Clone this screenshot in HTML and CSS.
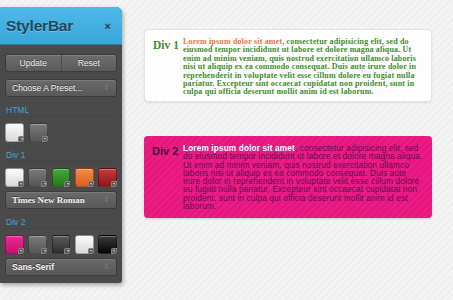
FILE: index.html
```html
<!DOCTYPE html>
<html lang="en">
  <head>
    <meta charset="UTF-8" />
    <title>StylerBar</title>
    <link rel="stylesheet" href="styles.css">
  </head>
  <body>
    <div id="page">
      <div id="stylerbar">
        <div class="bar-head">
          <span class="bar-title">StylerBar</span>
          <span class="bar-close">&times;</span>
        </div>
        <div class="bar-body">
          <div class="btn-row">
            <div class="btn">Update</div>
            <div class="btn">Reset</div>
          </div>
          <div class="select first">Choose A Preset...<span class="arrows">&#8661;</span></div>

          <div class="label">HTML</div>
          <div class="swatches">
            <div class="swatch white"></div>
            <div class="swatch grey"></div>
          </div>

          <div class="label">Div 1</div>
          <div class="swatches">
            <div class="swatch white"></div>
            <div class="swatch grey"></div>
            <div class="swatch green"></div>
            <div class="swatch orange"></div>
            <div class="swatch red"></div>
          </div>
          <div class="select serif">Times New Roman<span class="arrows">&#8661;</span></div>

          <div class="label">Div 2</div>
          <div class="swatches">
            <div class="swatch pink"></div>
            <div class="swatch grey"></div>
            <div class="swatch dark"></div>
            <div class="swatch white"></div>
            <div class="swatch black"></div>
          </div>
          <div class="select">Sans-Serif<span class="arrows">&#8661;</span></div>
        </div>
      </div>

      <div id="content">
        <div class="card" id="div1">
          <div class="card-title">Div 1</div>
          <p><span class="hl">Lorem ipsum dolor sit amet</span>, consectetur adipisicing elit, sed do eiusmod tempor incididunt ut labore et dolore magna aliqua. Ut enim ad minim veniam, quis nostrud exercitation ullamco laboris nisi ut aliquip ex ea commodo consequat. Duis aute irure dolor in reprehenderit in voluptate velit esse cillum dolore eu fugiat nulla pariatur. Excepteur sint occaecat cupidatat non proident, sunt in culpa qui officia deserunt mollit anim id est laborum.</p>
        </div>
        <div class="card" id="div2">
          <div class="card-title">Div 2</div>
          <p><span class="hl">Lorem ipsum dolor sit amet</span>, consectetur adipisicing elit, sed do eiusmod tempor incididunt ut labore et dolore magna aliqua. Ut enim ad minim veniam, quis nostrud exercitation ullamco laboris nisi ut aliquip ex ea commodo consequat. Duis aute irure dolor in reprehenderit in voluptate velit esse cillum dolore eu fugiat nulla pariatur. Excepteur sint occaecat cupidatat non proident, sunt in culpa qui officia deserunt mollit anim id est laborum.</p>
        </div>
      </div>
    </div>
  </body>
</html>
```

FILE: styles.css
```css
* {
  box-sizing: border-box;
}
body {
  margin: 0;
  background-color: #f0f0f0;
  background-image: repeating-linear-gradient(135deg, rgba(255,255,255,0.35) 0px, rgba(255,255,255,0.35) 2px, transparent 2px, transparent 5px);
  font-family: "Liberation Sans", Arial, sans-serif;
  overflow: hidden;
}
#page {
  display: flex;
  align-items: flex-start;
  height: 300px;
}

/* sidebar */
#stylerbar {
  width: 122px;
  margin-top: 7px;
  background-color: #4b4a4a;
  border-radius: 0 6px 3px 0;
  box-shadow: 1px 2px 4px rgba(0, 0, 0, 0.35);
}
.bar-head {
  height: 38px;
  padding: 0 11px 0 6px;
  display: flex;
  align-items: center;
  justify-content: space-between;
  background: linear-gradient(#4fb9e9, #39a6da);
  border-top-right-radius: 6px;
  border-bottom: 1px solid #2f7fa8;
}
.bar-title {
  font-size: 15.5px;
  font-weight: bold;
  color: #25475a;
  letter-spacing: -0.2px;
  text-shadow: 0 1px 0 rgba(255, 255, 255, 0.25);
  padding-top: 1px;
}
.bar-close {
  font-size: 11px;
  font-weight: bold;
  color: #2e3a42;
}
.bar-body {
  padding: 9px 5px 7px 5px;
}
.btn-row {
  display: flex;
  height: 18px;
  border: 1px solid #3d3c3c;
  border-radius: 3px;
  background: linear-gradient(#6e6d6d, #5c5b5b);
  box-shadow: inset 0 1px 0 rgba(255, 255, 255, 0.15);
}
.btn {
  flex: 1;
  display: flex;
  align-items: center;
  justify-content: center;
  font-size: 8.5px;
  color: #ececec;
  text-shadow: 0 -1px 0 rgba(0, 0, 0, 0.4);
}
.btn + .btn {
  border-left: 1px solid #4f4e4e;
}
.select {
  position: relative;
  height: 18px;
  margin-top: 4px;
  padding-left: 6px;
  display: flex;
  align-items: center;
  border: 1px solid #3d3c3c;
  border-radius: 3px;
  background: linear-gradient(#6a6969, #5a5959);
  box-shadow: inset 0 1px 0 rgba(255, 255, 255, 0.12);
  font-size: 8.5px;
  font-weight: bold;
  color: #f0f0f0;
  text-shadow: 0 -1px 0 rgba(0, 0, 0, 0.4);
}
.select.first {
  margin-top: 7px;
  font-weight: normal;
}
.select.serif {
  font-family: "Liberation Serif", "Times New Roman", serif;
  font-size: 9px;
}
.arrows {
  position: absolute;
  right: 6px;
  top: 3px;
  font-size: 8px;
  font-weight: normal;
  color: #7c7b7b;
  text-shadow: none;
}
.label {
  margin-top: 6px;
  height: 14px;
  line-height: 14px;
  padding-left: 1px;
  font-size: 8.5px;
  color: #3aa2dc;
  border-bottom: 1px dotted rgba(0, 0, 0, 0.15);
}
.swatches {
  display: flex;
  gap: 4.5px;
  margin-top: 6px;
  margin-bottom: 4px;
}
.swatch {
  position: relative;
  width: 19px;
  height: 19px;
  border-radius: 3px;
  border: 1px solid rgba(0, 0, 0, 0.35);
  box-shadow: inset 0 1px 0 rgba(255, 255, 255, 0.3);
}
.swatch::after {
  content: "";
  position: absolute;
  right: -1px;
  bottom: -1px;
  width: 6px;
  height: 6px;
  border-radius: 2px 0 3px 0;
  background: #5a5a5a;
  box-shadow: inset 0 0 0 1px rgba(255, 255, 255, 0.25);
}
.swatch::before {
  content: "";
  position: absolute;
  right: 0.5px;
  bottom: 1.5px;
  z-index: 1;
  border-left: 1.5px solid transparent;
  border-right: 1.5px solid transparent;
  border-top: 2px solid #d0d0d0;
}
.white { background: linear-gradient(#fbfbfb, #d9d9d9); }
.grey { background: linear-gradient(#7a7a7a, #565656); }
.dark { background: linear-gradient(#5a5a5a, #2e2e2e); }
.black { background: linear-gradient(#3a3a3a, #050505); }
.green { background: linear-gradient(#45a83a, #257a1c); }
.orange { background: linear-gradient(#f58a4a, #d8601f); }
.red { background: linear-gradient(#c63a3a, #8e1717); }
.pink { background: linear-gradient(#ee2a93, #c80f6e); }

/* content cards */
#content {
  margin-left: 22px;
  width: 288px;
}
.card {
  display: flex;
  align-items: flex-start;
  border-radius: 4px;
}
.card p {
  margin: 0;
  flex: 1;
}
#div1 {
  margin-top: 29px;
  height: 73px;
  padding: 8px 6px 0 8px;
  background: #fdfdfd;
  border: 1px solid #e2e2e2;
  box-shadow: 0 1px 2px rgba(0, 0, 0, 0.08);
  font-family: "Liberation Serif", "Times New Roman", serif;
  font-weight: bold;
  color: #3f8d2b;
}
#div1 .card-title {
  width: 30px;
  font-size: 11.5px;
  line-height: 13px;
  margin-top: 1px;
  color: #4a8a2e;
}
#div1 p {
  font-size: 8px;
  line-height: 8.4px;
  letter-spacing: 0.17px;
}
#div1 .hl {
  color: #e9773c;
}
#div2 {
  margin-top: 34px;
  height: 82px;
  padding: 9px 7px 0 8px;
  background: #e8177f;
  background-image: repeating-linear-gradient(135deg, rgba(255,255,255,0.04) 0px, rgba(255,255,255,0.04) 2px, transparent 2px, transparent 5px);
  box-shadow: 0 1px 2px rgba(0, 0, 0, 0.15);
  color: #5e0f4e;
}
#div2 .card-title {
  width: 31px;
  font-size: 11px;
  font-weight: bold;
  line-height: 13px;
  color: #4c1040;
}
#div2 p {
  font-size: 8.25px;
  line-height: 8.3px;
  letter-spacing: 0.14px;
}
#div2 .hl {
  color: #ffffff;
  font-weight: bold;
}
```
